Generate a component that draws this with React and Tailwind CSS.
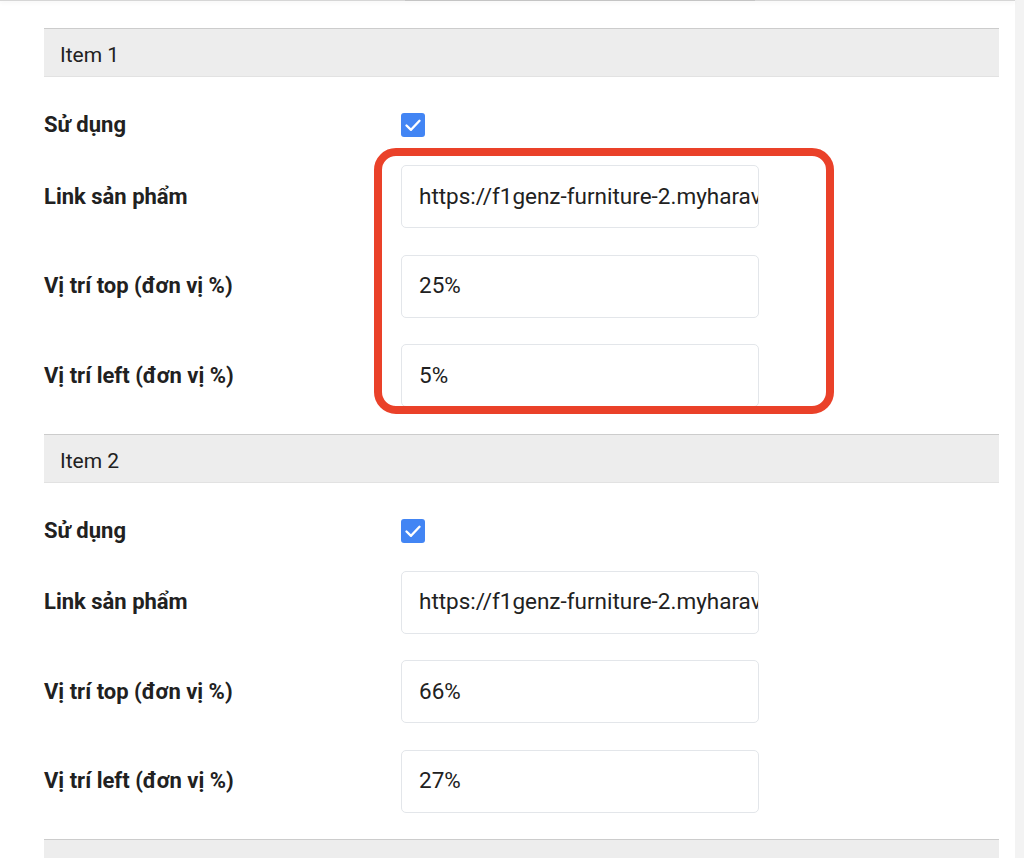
import React from "react";

function Check() {
  return (
    <div className="w-[24px] h-[24px] rounded-[3px] bg-[#4285f4] flex items-center justify-center">
      <svg width="24" height="24" viewBox="0 0 24 24" fill="none">
        <path d="M5.5 12.5 L10 16.8 L18.5 7.8" stroke="white" strokeWidth="2.4" strokeLinecap="round" strokeLinejoin="round" />
      </svg>
    </div>
  );
}

function Row({ label, children }) {
  return (
    <div className="flex items-center">
      <div className="w-[357px] shrink-0 font-bold text-[22px] leading-[24px] text-[#212121]">{label}</div>
      {children}
    </div>
  );
}

function Field({ value }) {
  return (
    <div className="w-[358px] h-[63px] border border-[#e3e6ea] rounded-[5px] bg-white flex items-center pl-[17px] overflow-hidden whitespace-nowrap text-[22.5px] text-[#212121]">
      {value}
    </div>
  );
}

function Header({ title }) {
  return (
    <div className="h-[49px] bg-[#ededed] border-t border-t-[#cccccc] border-b border-b-[#e2e2e2] flex items-center pl-[16px] pt-[7px] text-[21px] text-[#212121]">
      {title}
    </div>
  );
}

function Item({ title, link, top, left, highlight }) {
  return (
    <section className="relative">
      <Header title={title} />
      <div className="mt-[36px]">
        <Row label="Sử dụng">
          <Check />
        </Row>
      </div>
      <div className="mt-[28px] flex flex-col gap-[26.5px]">
        <Row label="Link sản phẩm">
          <Field value={link} />
        </Row>
        <Row label="Vị trí top (đơn vị %)">
          <Field value={top} />
        </Row>
        <Row label="Vị trí left (đơn vị %)">
          <Field value={left} />
        </Row>
      </div>
      <div className="h-[26.5px]" />
      {highlight && (
        <div className="absolute left-[330px] top-[120px] w-[460px] h-[266px] border-[8px] border-[#ea4129] rounded-[22px] pointer-events-none" />
      )}
    </section>
  );
}

export default function App() {
  return (
    <div className="w-[1024px] h-[858px] overflow-hidden flex bg-white" style={{ fontFamily: "Roboto, 'Noto Sans', sans-serif" }}>
      <div className="flex-1 relative">
        <div className="h-[1px] bg-[#d6d6d6] shadow-[0_1px_4px_rgba(0,0,0,0.12)]" />
        <div className="absolute top-0 left-[405px] w-[350px] h-[1px] bg-[#c4c4c4]" />
        <div className="pl-[44px] pr-[16px] pt-[27px]">
          <Item title="Item 1" link="https://f1genz-furniture-2.myharavan.com" top="25%" left="5%" highlight />
          <Item title="Item 2" link="https://f1genz-furniture-2.myharavan.com" top="66%" left="27%" />
          <Header title="" />
        </div>
      </div>
      <div className="w-[9px] bg-[#f3f3f3]" />
    </div>
  );
}
